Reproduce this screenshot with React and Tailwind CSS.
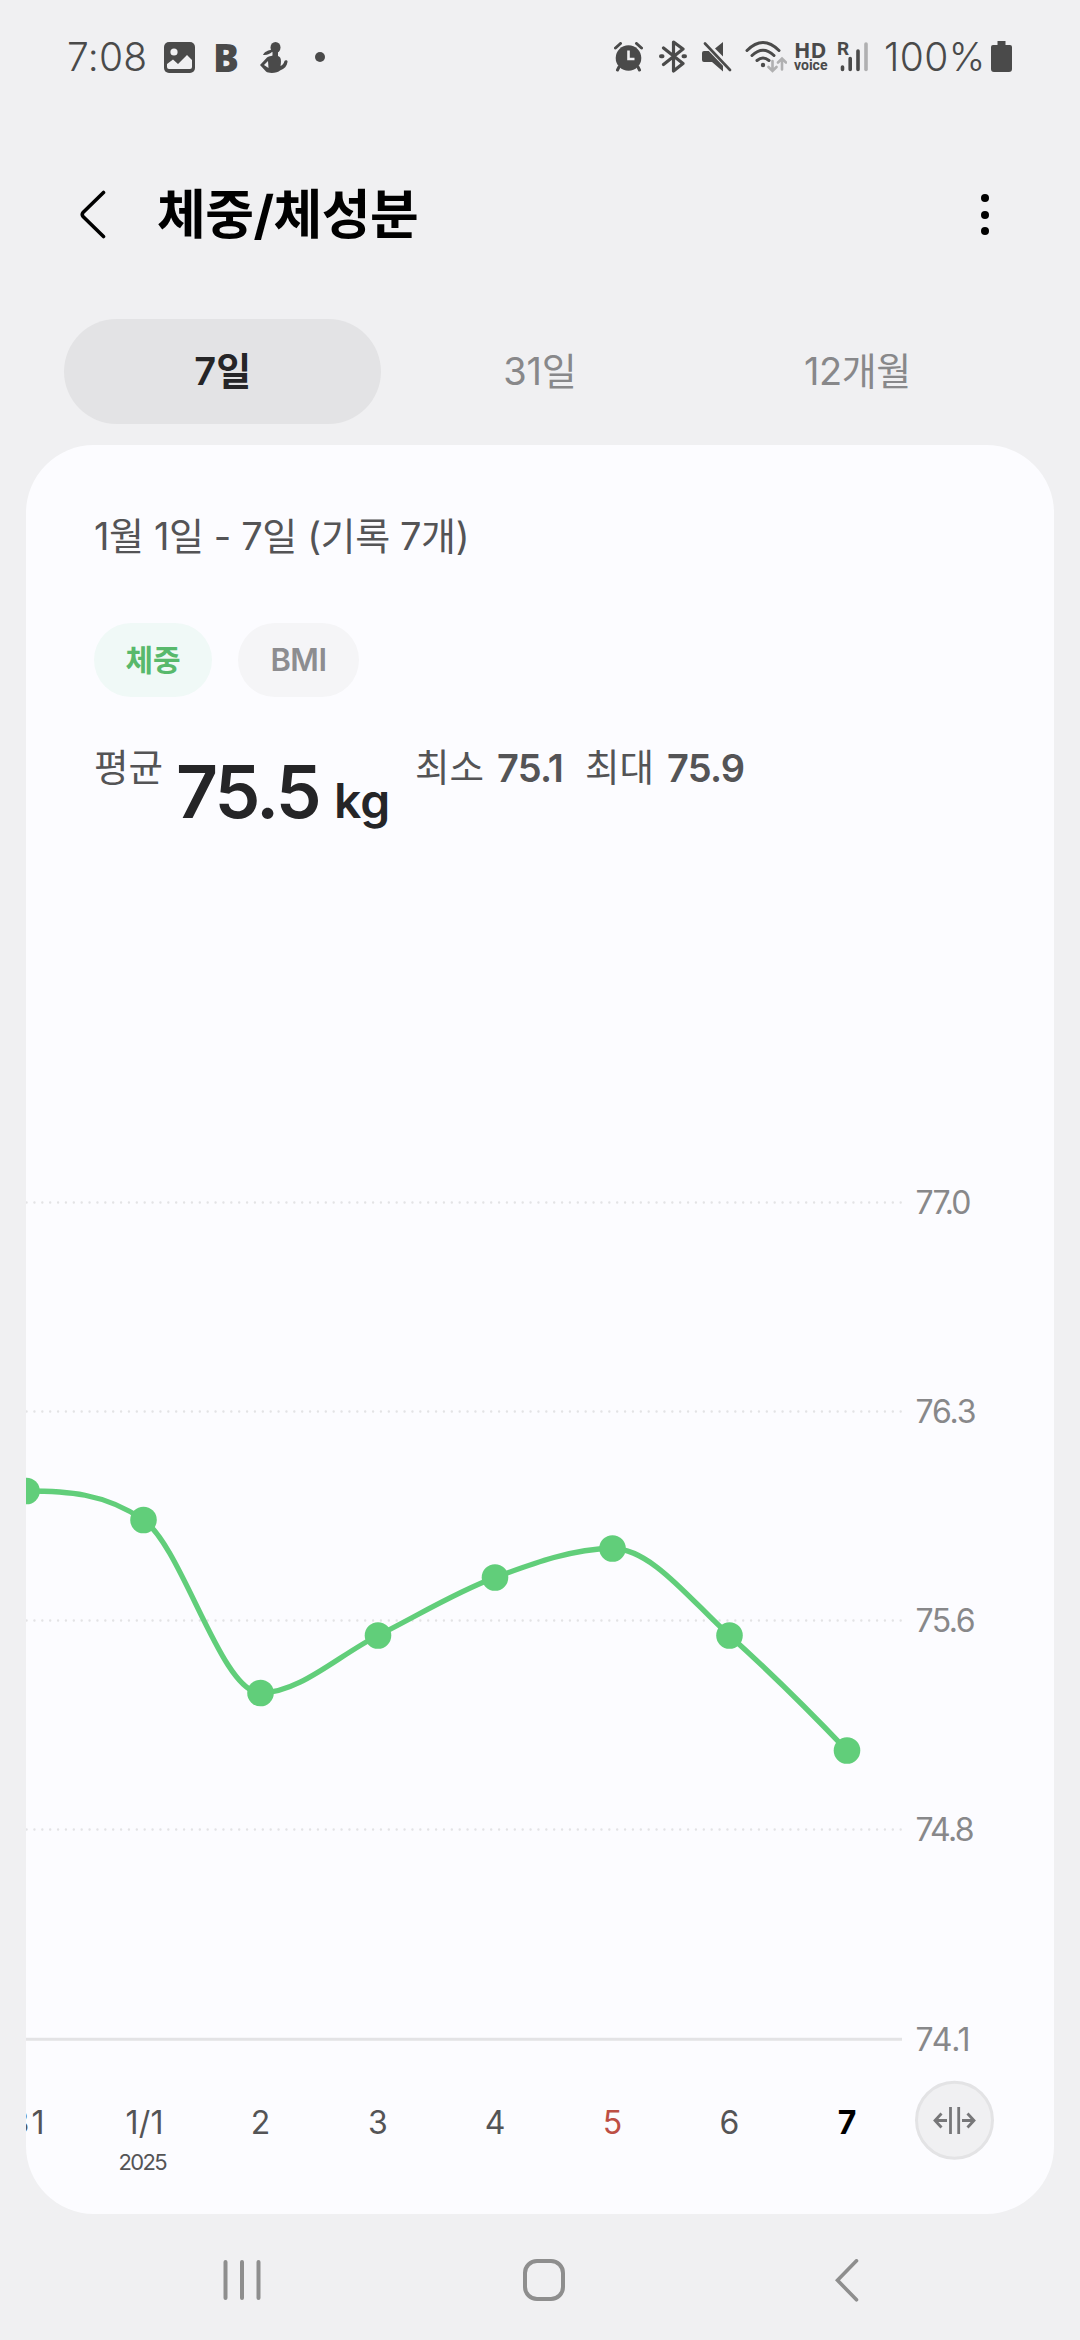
const GREEN = '#61ce7a'
const GRID_LINES = [
  { y: 1202.5, label: '77.0', width: 56 },
  { y: 1411.5, label: '76.3', width: 61 },
  { y: 1620.5, label: '75.6', width: 60 },
  { y: 1829.5, label: '74.8', width: 59 },
]

// slope: tangent of the curve at the point
const POINTS = [
  { x: 26.5, y: 1491, slope: 0 },
  { x: 143.5, y: 1520, slope: 0.7 },
  { x: 260.5, y: 1693, slope: 0 },
  { x: 378, y: 1635.5, slope: -0.5 },
  { x: 495, y: 1577.5, slope: -0.37 },
  { x: 612.5, y: 1548.5, slope: 0 },
  { x: 729.5, y: 1635.5, slope: 0.9 },
  { x: 847, y: 1750.5, slope: 1.05 },
]

const DAYS = [
  { x: 144.5, label: '1/1', width: 38, color: '#545456' },
  { x: 260.5, label: '2', color: '#545456' },
  { x: 378, label: '3', color: '#545456' },
  { x: 495, label: '4', color: '#545456' },
  { x: 612.5, label: '5', color: '#bd4f45' },
  { x: 729.5, label: '6', color: '#545456' },
  { x: 847, label: '7', color: '#000000', bold: true },
]

function curvePath(points) {
  let d = `M${points[0].x} ${points[0].y}`
  for (let i = 1; i < points.length; i++) {
    const a = points[i - 1]
    const b = points[i]
    const h = (b.x - a.x) / 3
    d += `C${a.x + h} ${a.y + a.slope * h} ${b.x - h} ${b.y - b.slope * h} ${b.x} ${b.y}`
  }
  return d
}

function StatusBar() {
  return (
    <div className="flex h-[114px] items-start pl-[67px] pt-[34px] text-[#4a4a4a]">
      <span className="w-[97px] text-[39px] font-[330] leading-[46px] tracking-[0.2px]">7:08</span>
      <svg className="mt-2 h-[31px] w-[31px]" viewBox="0 0 31 31" fill="currentColor">
        <rect width="31" height="31" rx="5" />
        <circle cx="10" cy="10" r="3.6" fill="#f0f0f2" />
        <path d="M3 22 9 17.5 14 22 23 13 28 18V25q0 2-2 2H5q-2 0-2-2Z" fill="#f0f0f2" />
      </svg>
      <span className="ml-[18px] w-[47px] font-['Open_Sans'] text-[38.5px] font-extrabold leading-[46px]">B</span>
      <svg className="mt-2 h-[31px] w-[28px]" viewBox="0 0 28 31" fill="currentColor">
        <ellipse cx="15.500" cy="5.500" rx="5" ry="5.500" />
        <path d="M12 8C8 8 4 10 3 13c4 .500 7-1 9.500-3.500Z" />
        <path
          fillRule="evenodd"
          d="M12.500 9h5.500v5c3 1 3.500 4 2.500 10 2-1 3-2 4-5 .500-1.500 3.500-1 3 1-.500 4-3 7-7.500 8.500-2 2.500-11 3.500-14 1L0 23l7-7.500c1.500-1.500 4-1 5.500-2ZM8 19l-4 4 4.500 3Z"
        />
      </svg>
      <span className="ml-[27px] mt-[18px] h-[10px] w-[10px] rounded-full bg-[#4a4a4a]" />

      <svg className="ml-[289px] mt-2 h-[30px] w-[29px]" viewBox="0 0 29 30" fill="currentColor">
        <circle cx="14.500" cy="16" r="12.800" />
        <path d="M1.500 6 6.500 1.500M27.500 6 22.500 1.500M5 25 3.500 28M24 25l1.500 3" stroke="currentColor" strokeWidth="3" strokeLinecap="round" />
        <path d="M14.500 8.500v8.500h6" fill="none" stroke="#f0f0f2" strokeWidth="2.600" />
      </svg>
      <svg className="ml-[16px] mt-1.5 h-[33px] w-[28px]" viewBox="0 0 28 33" fill="none" stroke="currentColor" strokeWidth="3.200" strokeLinejoin="round" strokeLinecap="round">
        <path d="M4.500 8 24 23.500 14.500 31V2L24 9 4.500 24.500" />
        <path d="M2 16.200h1.500M24.500 16.200H26" strokeWidth="4" />
      </svg>
      <svg className="ml-[15px] mt-2 h-[30px] w-[30px]" viewBox="0 0 30 30" fill="currentColor">
        <path d="M2 9h7l12 12v8.500L10 20H2q-2 0-2-2v-7q0-2 2-2ZM13 6.500 21 0v14.500Z" />
        <path d="M3 1.500 28.500 28" stroke="#f0f0f2" strokeWidth="5" />
        <path d="M3 1.500 28 28" stroke="currentColor" strokeWidth="2.600" strokeLinecap="round" />
      </svg>
      <svg className="ml-[13px] mt-[6px] h-[34px] w-[42px]" viewBox="0 0 42 34" fill="none" stroke="currentColor" strokeWidth="3" strokeLinecap="round">
        <path d="M2 10.500Q18 -5.500 34 10.500M7 15.500Q18 5 29 15.500M12 20.500Q18 15.500 24 20.500" />
        <circle cx="18" cy="25" r="2.200" fill="currentColor" stroke="none" />
        <path d="M27.500 21v9.500M23.500 27l4 4 4-4M37 29.500V19M33 22.500l4-4 4 4" stroke="#b0b0b1" strokeWidth="2.600" />
      </svg>
      <div className="ml-[7px] mt-[6px] flex w-[36px] flex-col items-start">
        <span className="font-['Open_Sans'] text-[21.5px] font-bold leading-[20px]">HD</span>
        <span className="font-[Roboto] text-[14px] font-bold leading-[11px]">voice</span>
      </div>
      <div className="ml-[7px] mt-[6px] flex h-[34px] w-[34px] items-start">
        <span className="w-[3px] font-[Roboto] text-[19px] font-bold leading-[17px]">R</span>
        <svg className="h-[34px] w-[31px]" viewBox="0 0 31 34" fill="none" stroke="currentColor" strokeWidth="3.600" strokeLinecap="round">
          <path d="M2.500 27v2.500M10.200 18.500v11M18 11v18.500" />
          <path d="M26 4v25.500" stroke="#b0b0b1" />
        </svg>
      </div>
      <span className="ml-[13px] w-[107px] whitespace-nowrap text-[39px] font-[330] leading-[46px] tracking-[0.4px]">100%</span>
      <svg className="mt-[7px] h-[31px] w-[21px]" viewBox="0 0 21 31" fill="currentColor">
        <path d="M6.500 0h8v4H19q2 0 2 2v22q0 3-3 3H3q-3 0-3-3V6q0-2 2-2h4.500Z" />
      </svg>
    </div>
  )
}

function Header() {
  return (
    <div className="flex h-[205px] items-start pl-[80px] pt-[70px]">
      <svg className="mt-[6px] h-[50px] w-[26px]" viewBox="0 0 26 50" fill="none" stroke="#000" strokeWidth="3.600" strokeLinecap="round" strokeLinejoin="round">
        <path d="M23.500 2.500 3 22.500Q1.500 24.500 3 26.500L23.500 46.500" />
      </svg>
      <h1 className="ml-[51px] mt-px text-[53px] font-bold leading-[60px] tracking-[-0.5px]">체중/체성분</h1>
      <div className="ml-auto mr-[91px] mt-[10px] flex flex-col gap-[8.500px]">
        <span className="h-2 w-2 rounded-full bg-black" />
        <span className="h-2 w-2 rounded-full bg-black" />
        <span className="h-2 w-2 rounded-full bg-black" />
      </div>
    </div>
  )
}

function Tabs() {
  return (
    <div className="mx-[64px] grid h-[105px] grid-cols-3 text-center text-[38px] leading-[105px] text-[#88888a]">
      <span className="rounded-full bg-[#e3e3e5] font-semibold text-[#252527]">7일</span>
      <span className="tracking-[-0.2px]">31일</span>
      <span className="tracking-[-0.5px]">12개월</span>
    </div>
  )
}

function Summary() {
  return (
    <div className="px-[68px] pt-[65px] text-[#545456]">
      <p className="text-[38px] leading-[52px] tracking-[-0.4px]">1월 1일 - 7일 (기록 7개)</p>
      <div className="mt-[61px] flex gap-[26px] text-center leading-[74px]">
        <span className="w-[118px] rounded-full bg-[#f0f9f7] text-[30px] font-bold text-[#58b96c]">체중</span>
        <span className="w-[121px] rounded-full bg-[#f5f5f7] text-[31px] font-semibold tracking-[-0.5px] text-[#8d8d90]">BMI</span>
      </div>
      <div className="mt-[44px] flex items-start whitespace-nowrap text-[37.5px] leading-[54px]">
        <span className="w-[82px]">평균</span>
        <span className="w-[158px] text-[73px] font-semibold leading-[101px] tracking-[-2.8px] text-[#252527]">75.5</span>
        <span className="w-[81px] pt-[20px] text-[48px] font-semibold leading-[80px] text-[#252527]">kg</span>
        <span className="w-[82px]">최소</span>
        <span className="w-[88px] text-[38px] font-semibold tracking-[-0.8px]">75.1</span>
        <span className="w-[82px]">최대</span>
        <span className="text-[38px] font-semibold tracking-[-0.8px]">75.9</span>
      </div>
    </div>
  )
}

function WeightChart() {
  return (
    <svg className="mt-auto h-[1064px] w-[1028px] shrink-0" viewBox="26 1150 1028 1064">
      {GRID_LINES.map((line) => (
        <g key={line.label}>
          <path d={`M900.700 ${line.y}H26`} stroke="#e3e3e5" strokeWidth="2.400" strokeDasharray="0.010 7.865" strokeLinecap="round" />
          <text x="915.500" y={line.y + 11.5} fontSize="32" fill="#88888a" textLength={line.width}>
            {line.label}
          </text>
        </g>
      ))}
      <path d="M26 2039.300H902" stroke="#e3e3e5" strokeWidth="3" />
      <text x="915.500" y="2051" fontSize="32" fill="#88888a" textLength="55">74.1</text>

      <path d={curvePath(POINTS)} fill="none" stroke={GREEN} strokeWidth="5.300" />
      {POINTS.map((p) => (
        <circle key={p.x} cx={p.x} cy={p.y} r="13.300" fill={GREEN} />
      ))}

      <g fontSize="32" textAnchor="middle">
        <text x="27" y="2134" fill="#545456" textLength="35">31</text>
        {DAYS.map((day) => (
          <text key={day.label} x={day.x} y="2134" fill={day.color} fontWeight={day.bold ? 700 : 400} textLength={day.width}>
            {day.label}
          </text>
        ))}
        <text x="143" y="2170" fontSize="22" fill="#545456" textLength="49">2025</text>
      </g>

      <circle cx="954.500" cy="2120.300" r="38" fill="#f0f0f2" stroke="#e3e3e5" strokeWidth="3" />
      <g fill="none" stroke="#777779" strokeWidth="2.800">
        <path d="M950.500 2107v27M958.700 2107v27" />
        <path d="M947 2120.500H935.500M941.500 2113.500l-6.500 7 6.500 7M962 2120.500h11.500M967.500 2113.500l6.500 7-6.500 7" />
      </g>
    </svg>
  )
}

function NavBar() {
  return (
    <div className="flex h-[126px] items-start pl-[223px] pt-[45px] text-[#8e8e8e]">
      <svg className="h-[42px] w-[38px]" viewBox="0 0 38 42" stroke="currentColor" strokeWidth="4" strokeLinecap="round">
        <path d="M2.500 3v36M19 3v36M35.500 3v36" />
      </svg>
      <span className="ml-[262px] h-[42px] w-[42px] rounded-[14px] border-4 border-[#8e8e8e]" />
      <svg className="ml-[270px] h-[44px] w-[25px]" viewBox="0 0 25 44" fill="none" stroke="currentColor" strokeWidth="3.600" strokeLinecap="round">
        <path d="M21.500 1.800 2.500 21.300 21.500 40.800" />
      </svg>
    </div>
  )
}

export default function App() {
  return (
    <div className="flex h-[2340px] w-[1080px] flex-col overflow-hidden bg-[#f0f0f2] font-[Inter,'Noto_Sans_CJK_KR',sans-serif]">
      <StatusBar />
      <Header />
      <Tabs />
      <main className="mx-[26px] mt-[21px] flex h-[1769px] shrink-0 flex-col overflow-hidden rounded-[68px] bg-[#fcfcff]">
        <Summary />
        <WeightChart />
      </main>
      <NavBar />
    </div>
  )
}
